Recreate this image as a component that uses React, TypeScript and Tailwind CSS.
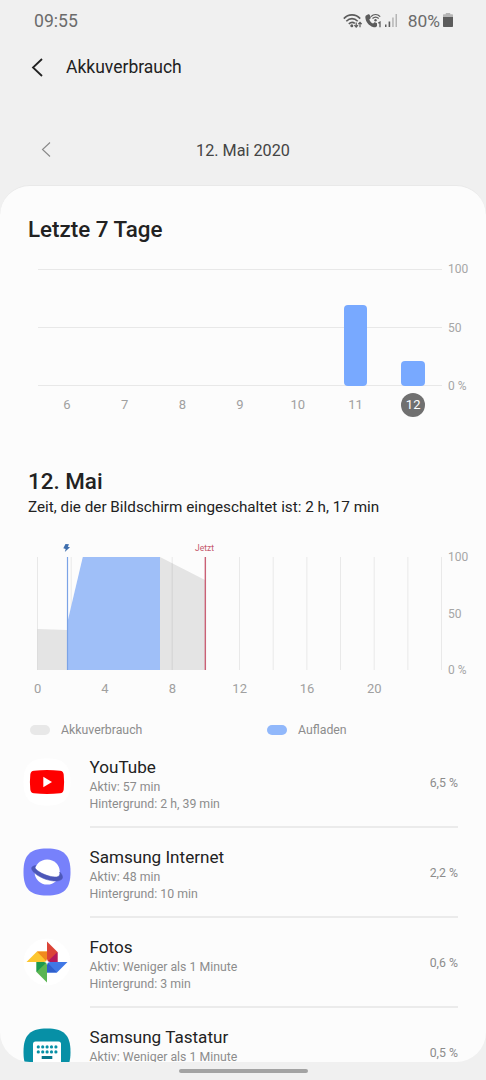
import type { ReactNode } from 'react';

const days = [
    { label: '6', value: 0 },
    { label: '7', value: 0 },
    { label: '8', value: 0 },
    { label: '9', value: 0 },
    { label: '10', value: 0 },
    { label: '11', value: 69 },
    { label: '12', value: 21.5, selected: true },
];

const hours = ['0', '4', '8', '12', '16', '20'];

function WifiIcon() {
    return (
        <svg className="w-5 h-4" viewBox="0 0 20 16" fill="none" stroke="#5c5c5c" strokeWidth="1.6">
            <path d="M0.8 5.6C5.4 0.6 12.6 0.6 17.2 5.6" />
            <path d="M3.3 8.3C6.8 4.7 11.2 4.7 14.7 8.3" />
            <path d="M5.8 10.9C7.9 9 10.1 9 11.8 10.4" />
            <circle cx="8.8" cy="12.7" r="1.5" fill="#5c5c5c" stroke="none" />
            <path d="M13.2 9.5V14M11.4 12.2L13.2 14.2L15 12.2" strokeWidth="1.2" />
            <path d="M17 14.2V9.7M15.3 11.2L17 9.3L18.7 11.2" strokeWidth="1.2" />
        </svg>
    );
}

function WifiCallIcon() {
    return (
        <svg className="w-[17px] h-4" viewBox="0 0 17 16" fill="none" stroke="#5c5c5c">
            <path
                d="M1 2.6L3.3 1.3C4 1 4.5 1.3 4.8 1.9L5.7 4.3C5.9 4.9 5.7 5.3 5.2 5.7L4.3 6.4C5 8.3 6.3 9.7 8.1 10.6L9 9.7C9.4 9.3 9.8 9.2 10.4 9.4L12 10.2V12.9C11.4 14.1 9.7 14.6 8 14C4 12.7 0.9 9 0.4 5C0.3 3.9 0.4 3.1 1 2.6Z"
                fill="#5c5c5c"
                stroke="none"
            />
            <path d="M5.9 3.6C8.7 0.9 12.5 0.9 15.2 3.6M7.5 5.5C9.4 3.8 11.8 3.8 13.7 5.5" strokeWidth="1.3" />
            <circle cx="10.5" cy="7.2" r="1.2" fill="#5c5c5c" stroke="none" />
            <path d="M13.3 10.1L15 9.2V14.3" strokeWidth="1.3" />
        </svg>
    );
}

function SignalIcon() {
    return (
        <svg className="w-3 h-4" viewBox="0 0 12 16">
            <path d="M0 11.5H1.5V14H0ZM3.6 8.5H5.2V14H3.6Z" fill="#5c5c5c" />
            <path d="M7.2 4.5H8.7V14H7.2ZM10.5 1H12V14H10.5Z" fill="#b5b5b5" />
        </svg>
    );
}

function BatteryIcon() {
    return (
        <svg className="w-[10px] h-4" viewBox="0 0 10 16">
            <path d="M2.8 0H7.2V1.3H9C9.6 1.3 10 1.7 10 2.3V4H0V2.3C0 1.7 0.4 1.3 1 1.3H2.8Z" fill="#b5b5b5" />
            <path d="M0 4H10V13C10 13.6 9.6 14 9 14H1C0.4 14 0 13.6 0 13Z" fill="#5c5c5c" />
        </svg>
    );
}

function StatusBar() {
    return (
        <div className="h-[42px] flex items-center justify-between pl-[34px] pr-[33px] text-[#6b6b6b]">
            <span className="text-[17.6px]">09:55</span>
            <div className="flex items-center">
                <WifiIcon />
                <span className="ml-[2px] flex"><WifiCallIcon /></span>
                <span className="ml-[3px] flex"><SignalIcon /></span>
                <span className="ml-[11px] mr-[3px] text-[17.4px]">80%</span>
                <BatteryIcon />
            </div>
        </div>
    );
}

function AxisLabels() {
    return (
        <div className="flex flex-col justify-between text-[12px] leading-4 text-[#a6a6a6] -my-2 pl-[6px]">
            <span>100</span>
            <span>50</span>
            <span>0 %</span>
        </div>
    );
}

function WeekChart() {
    return (
        <div className="mt-6 pl-[38px]">
            <div className="flex h-[117px]">
                <div className="relative w-[404px] flex flex-col justify-between">
                    <div className="h-px bg-[#e8e8e8]" />
                    <div className="h-px bg-[#e8e8e8]" />
                    <div className="h-px bg-[#e8e8e8]" />
                    <div className="absolute inset-0 flex items-end">
                        {days.map(day => (
                            <div key={day.label} className="flex-1 h-full flex items-end justify-center">
                                <div className="w-[23.5px] rounded bg-[#78a9ff]" style={{ height: `${day.value}%` }} />
                            </div>
                        ))}
                    </div>
                </div>
                <AxisLabels />
            </div>
            <div className="mt-[7px] w-[404px] flex text-[13px] text-[#a0a0a0]">
                {days.map(day => (
                    <div key={day.label} className="flex-1 flex justify-center">
                        <span className={day.selected ? 'size-6 rounded-full bg-[#707070] text-white text-center leading-6' : 'leading-6'}>
                            {day.label}
                        </span>
                    </div>
                ))}
            </div>
        </div>
    );
}

function DayChart() {
    return (
        <div className="mt-[25px] pl-[37px]">
            <div className="h-[15px] relative text-[8.5px] leading-3 text-[#c4566b]">
                <svg className="absolute left-[26px] top-[2px] w-[7px] h-2" viewBox="0 0 7 8">
                    <path d="M2.5 0L6 0.2L4.8 2.7L7 3.2L1.8 8L2.7 4.9L0.3 4.3Z" fill="#3f6fae" />
                </svg>
                <span className="absolute left-[158px]">Jetzt</span>
            </div>
            <div className="flex h-[113px]">
                <svg className="w-[405px] h-[113px]" viewBox="0 0 405 113">
                    <path d="M0.5 72L30.5 73V113H0.5ZM123 0L168 23V113H123Z" fill="#e4e4e4" />
                    {Array.from({ length: 13 }, (_, i) => (
                        <path key={i} d={`M${0.5 + i * 33.67} 0V113`} stroke="#000" strokeOpacity="0.09" strokeWidth="0.9" />
                    ))}
                    <path d="M30 113V67L45.8 0H123V113Z" fill="#9fbff8" />
                    <path d="M30.5 0V113" stroke="#7ba3e6" strokeWidth="1.2" />
                    <path d="M168.3 0V113" stroke="#c8596f" strokeWidth="1.3" />
                </svg>
                <AxisLabels />
            </div>
            <div className="mt-[10px] flex text-[13px] leading-[18px] text-[#a0a0a0] -ml-[33px]">
                {hours.map(hour => (
                    <span key={hour} className="w-[67.33px] text-center">{hour}</span>
                ))}
            </div>
            <div className="mt-[23px] -ml-[7px] flex text-[12.3px] leading-[18px] text-[#8c8c8c]">
                <div className="w-[237px] flex items-center">
                    <span className="w-[19.5px] h-[10px] rounded-full bg-[#e8e8e8]" />
                    <span className="ml-[11.5px]">Akkuverbrauch</span>
                </div>
                <div className="flex items-center">
                    <span className="w-[19.5px] h-[10px] rounded-full bg-[#91b8fb]" />
                    <span className="ml-[11.5px]">Aufladen</span>
                </div>
            </div>
        </div>
    );
}

const squircle = 'M24 0.5C41 0.5 47.5 7 47.5 24C47.5 41 41 47.5 24 47.5C7 47.5 0.5 41 0.5 24C0.5 7 7 0.5 24 0.5Z';

function YouTubeIcon() {
    return (
        <svg className="size-12" viewBox="0 0 48 48">
            <path d={squircle} fill="#fff" />
            <path d="M11 12.7Q24 11.3 37 12.7Q40.3 13 40.7 16.5Q41.5 24 40.7 31.5Q40.3 35 37 35.3Q24 36.7 11 35.3Q7.7 35 7.3 31.5Q6.5 24 7.3 16.5Q7.7 13 11 12.7Z" fill="#f00" />
            <path d="M20.3 18.8V29.2L29 24Z" fill="#fff" />
        </svg>
    );
}

function InternetIcon() {
    return (
        <svg className="size-12" viewBox="0 0 48 48">
            <path d={squircle} fill="#7781fb" />
            <circle cx="24.2" cy="24" r="12.6" fill="#fff" />
            <path
                d="M13.2 17.6C9.4 17.7 7.7 19.7 9.1 22.1C11.4 26.5 20.5 31.6 29 32.8C35.5 33.8 40 32 39.5 28.8C39.2 26.9 38.2 25.5 36.7 24.1C37.1 25.4 37.1 26.3 36.6 27.2C35.2 29.7 29.5 29.4 23.2 27.1C16.3 24.6 11.3 20.8 12 18.8C12.2 18.3 12.6 17.9 13.2 17.6Z"
                fill="#4c57b8"
                stroke="#4c57b8"
                strokeWidth="0.5"
            />
        </svg>
    );
}

function PhotosIcon() {
    return (
        <svg className="size-12" viewBox="0 0 48 48">
            <circle cx="24" cy="24" r="23.5" fill="#fff" />
            <path d="M24 3.5L34.5 14V24H24Z" fill="#db4437" />
            <path d="M24 24L34.5 14V24Z" fill="#b3195c" />
            <path d="M44.5 24L34 34.5H24V24Z" fill="#4078e6" />
            <path d="M24 24L34 34.5H24Z" fill="#2f5fcb" />
            <path d="M24 44.5L13.5 34V24H24Z" fill="#5ab552" />
            <path d="M24 24L13.5 34V24Z" fill="#1c9950" />
            <path d="M3.5 24L14 13.5H24V24Z" fill="#fdc62f" />
            <path d="M24 24L14 13.5H24Z" fill="#f18a1d" />
            <path d="M24 21L24.8 23.2L27 24L24.8 24.8L24 27L23.2 24.8L21 24L23.2 23.2Z" fill="#fff" />
        </svg>
    );
}

function KeyboardIcon() {
    return (
        <svg className="size-12" viewBox="0 0 48 48">
            <path d={squircle} fill="#0790a6" />
            <rect x="10" y="13.5" width="28" height="26" rx="2.5" fill="#fff" />
            {[0, 1, 2, 3, 4].map(i => (
                <g key={i} fill="#0790a6">
                    <circle cx={15.3 + i * 4.4} cy="18.9" r="1.6" />
                    <circle cx={15.3 + i * 4.4} cy="23.9" r="1.6" />
                </g>
            ))}
            <rect x="18.7" y="28" width="10.6" height="3" fill="#08778b" />
        </svg>
    );
}

type AppUsage = { name: string; active: string; background?: string; percent: string; icon: ReactNode };

const apps: AppUsage[] = [
    { name: 'YouTube', active: '57 min', background: '2 h, 39 min', percent: '6,5 %', icon: <YouTubeIcon /> },
    { name: 'Samsung Internet', active: '48 min', background: '10 min', percent: '2,2 %', icon: <InternetIcon /> },
    { name: 'Fotos', active: 'Weniger als 1 Minute', background: '3 min', percent: '0,6 %', icon: <PhotosIcon /> },
    { name: 'Samsung Tastatur', active: 'Weniger als 1 Minute', percent: '0,5 %', icon: <KeyboardIcon /> },
];

function AppRow({ name, active, background, percent, icon }: AppUsage) {
    return (
        <div className="h-[90px] shrink-0 flex pl-[23px] pr-7">
            <div className="w-[66.5px] pt-[20px]">{icon}</div>
            <div className="flex-1 flex justify-between border-b-2 border-[#ebebeb]">
                <div className="pt-[17px]">
                    <div className="text-[17.1px] leading-6 text-[#222]">{name}</div>
                    <div className="text-[12.3px] leading-4 text-[#8c8c8c]">Aktiv: {active}</div>
                    {background && <div className="mt-px text-[12.3px] leading-4 text-[#8c8c8c]">Hintergrund: {background}</div>}
                </div>
                <span className="pt-[37px] text-[12.3px] leading-4 text-[#8c8c8c]">{percent}</span>
            </div>
        </div>
    );
}

export default function App() {
    return (
        <div className="w-[486px] h-[1080px] overflow-hidden flex flex-col bg-[#f0f0f0] font-[Roboto,sans-serif] whitespace-nowrap">
            <StatusBar />
            <header className="h-[50px] flex items-center pl-[31px]">
                <svg className="w-3 h-[19px]" viewBox="0 0 12 19" fill="none" stroke="#222" strokeWidth="1.8">
                    <path d="M11 1L2 9.5L11 18" />
                </svg>
                <h1 className="ml-[23px] text-[17.5px] text-[#222]">Akkuverbrauch</h1>
            </header>
            <div className="mt-[23px] h-[70px] relative flex items-center justify-center">
                <svg className="absolute left-[41px] top-[27px] w-[10px] h-[15px]" viewBox="0 0 10 15" fill="none" stroke="#888" strokeWidth="1.1">
                    <path d="M9 0.5L1.5 7.5L9 14.5" />
                </svg>
                <span className="pt-[2px] text-[16.2px] text-[#444]">12. Mai 2020</span>
            </div>
            <main className="h-[877px] shrink-0 overflow-hidden flex flex-col rounded-[30px] bg-[#fcfcfc] border-t border-[#e9e9e9]">
                <h2 className="mt-[27px] ml-7 text-[22.4px] leading-8 font-medium text-[#222]">Letzte 7 Tage</h2>
                <WeekChart />
                <h2 className="mt-12 ml-7 text-[22.4px] leading-8 font-medium text-[#222]">12. Mai</h2>
                <p className="ml-7 text-[15.26px] leading-5 text-[#222]">Zeit, die der Bildschirm eingeschaltet ist: 2 h, 17 min</p>
                <DayChart />
                <div className="-mt-px">
                    {apps.map(app => <AppRow key={app.name} {...app} />)}
                </div>
            </main>
            <div className="flex-1 flex justify-center pt-[7px]">
                <div className="w-[129px] h-1 rounded-full bg-[#a3a3a3]" />
            </div>
        </div>
    );
}
